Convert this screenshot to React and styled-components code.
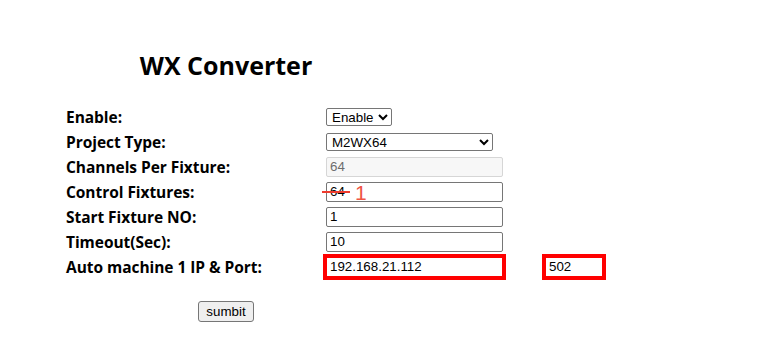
import React from "react";
import styled, { createGlobalStyle } from "styled-components";

const GlobalStyle = createGlobalStyle`
  html, body {
    margin: 0;
    padding: 0;
    background: #ffffff;
  }
`;

const Page = styled.div`
  padding: 48px 0 0 66px;
  font-family: "Open Sans", "Noto Sans", "DejaVu Sans", sans-serif;
  color: #000;
`;

const Title = styled.h2`
  width: 320px;
  margin: 0 0 22px;
  text-align: center;
  font-size: 25px;
  line-height: 34px;
  font-weight: 700;
`;

const Form = styled.div`
  display: flex;
  flex-direction: column;
`;

const Row = styled.div`
  display: flex;
  align-items: center;
  height: 25px;
`;

const Label = styled.label`
  width: 260px;
  font-size: 15.5px;
  font-weight: 700;
  letter-spacing: -0.05px;
`;

const Field = styled.div`
  position: relative;
  display: flex;
  align-items: center;
`;

const Select = styled.select`
  box-sizing: border-box;
  width: ${(p) => p.$w}px;
  height: 18px;
  padding: 0 0 0 1px;
  font-family: "Liberation Sans", Arial, sans-serif;
  font-size: 13.33px;
  color: #000;
  background: #fff;
  border: 1px solid #767676;
  border-radius: 2px;
`;

const Input = styled.input`
  box-sizing: border-box;
  width: ${(p) => p.$w || 177}px;
  height: 20px;
  padding: 0 3px;
  font-family: "Liberation Sans", Arial, sans-serif;
  font-size: 13.33px;
  color: #000;
  background: #fff;
  border: 1px solid ${(p) => (p.$marked ? "#ff0000" : "#767676")};
  border-radius: ${(p) => (p.$marked ? 0 : 2)}px;
  outline: ${(p) => (p.$marked ? "4px solid #ff0000" : "none")};
  outline-offset: -1px;

  &:disabled {
    color: #6d6d6d;
    background: #f7f7f7;
    border-color: #d6d6d6;
  }
`;

const PortField = styled(Field)`
  margin-left: 42px;
`;

const Strike = styled.span`
  position: absolute;
  left: -4px;
  top: 9px;
  width: 28px;
  height: 2px;
  background: #ee3b2e;
  pointer-events: none;
`;

const Note = styled.span`
  position: absolute;
  left: 29px;
  top: 0;
  font-family: "Liberation Sans", Arial, sans-serif;
  font-size: 21px;
  line-height: 22px;
  color: #ef5545;
  pointer-events: none;
`;

const Actions = styled.div`
  width: 320px;
  display: flex;
  justify-content: center;
  margin-top: 22px;
`;

const Button = styled.button`
  box-sizing: border-box;
  height: 21px;
  padding: 0 7px;
  font-family: "Liberation Sans", Arial, sans-serif;
  font-size: 13.33px;
  color: #000;
  background: #efefef;
  border: 1px solid #767676;
  border-radius: 3px;
`;

export default function App() {
  return (
    <Page>
      <GlobalStyle />
      <Title>WX Converter</Title>
      <Form>
        <Row>
          <Label>Enable:</Label>
          <Field>
            <Select $w={66} defaultValue="1">
              <option value="1">Enable</option>
              <option value="0">Disable</option>
            </Select>
          </Field>
        </Row>
        <Row>
          <Label>Project Type:</Label>
          <Field>
            <Select $w={167} defaultValue="M2WX64">
              <option value="M2WX64">M2WX64</option>
            </Select>
          </Field>
        </Row>
        <Row>
          <Label>Channels Per Fixture:</Label>
          <Field>
            <Input disabled defaultValue="64" />
          </Field>
        </Row>
        <Row>
          <Label>Control Fixtures:</Label>
          <Field>
            <Input defaultValue="64" />
            <Strike />
            <Note>1</Note>
          </Field>
        </Row>
        <Row>
          <Label>Start Fixture NO:</Label>
          <Field>
            <Input defaultValue="1" />
          </Field>
        </Row>
        <Row>
          <Label>Timeout(Sec):</Label>
          <Field>
            <Input defaultValue="10" />
          </Field>
        </Row>
        <Row>
          <Label>Auto machine 1 IP &amp; Port:</Label>
          <Field>
            <Input $marked defaultValue="192.168.21.112" />
          </Field>
          <PortField>
            <Input $marked $w={58} defaultValue="502" />
          </PortField>
        </Row>
      </Form>
      <Actions>
        <Button type="button">sumbit</Button>
      </Actions>
    </Page>
  );
}
